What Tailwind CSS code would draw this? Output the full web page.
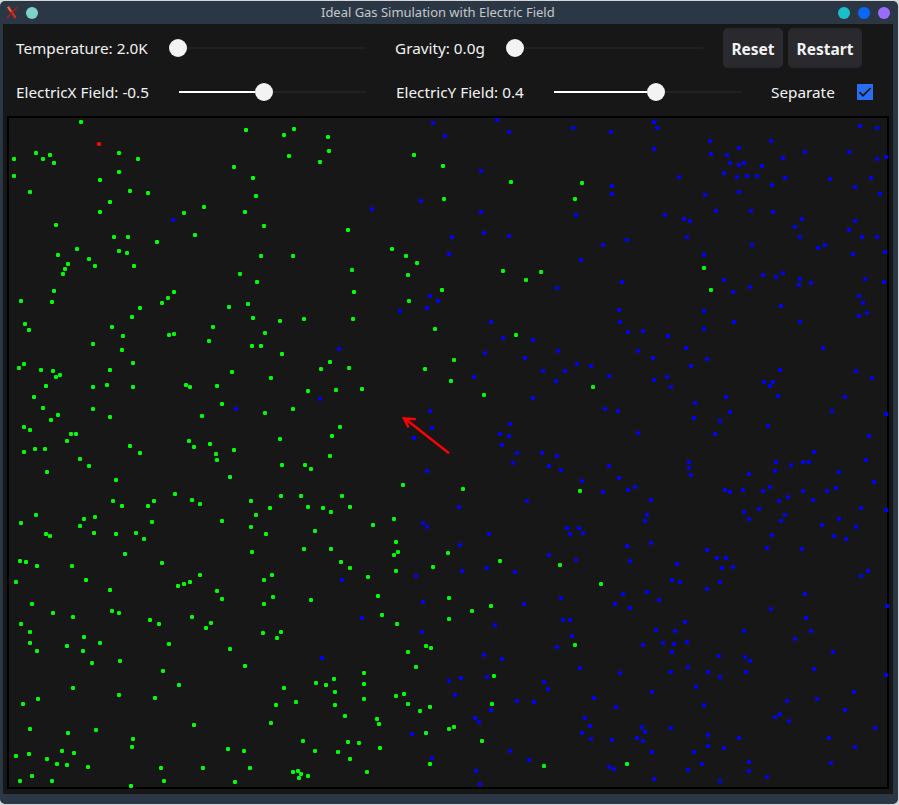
<!DOCTYPE html>
<html lang="en">
<head>
<meta charset="utf-8">
<title>Ideal Gas Simulation with Electric Field</title>
<script src="https://cdn.jsdelivr.net/npm/@tailwindcss/browser@4"></script>
</head>
<body class="w-[899px] h-[805px] overflow-hidden bg-[#d4d8d6] pt-px font-['Noto_Sans',sans-serif]">
<div class="w-[898px] h-[803px] flex flex-col bg-[#2c3745] rounded-[5px] overflow-hidden">
  <header class="h-[23px] shrink-0 flex items-center pl-[6px] pr-[8px]">
    <div class="w-[315px] flex items-center gap-[7px]">
      <svg width="13" height="13" viewBox="0 0 13 13" fill="none"><path d="M2.5 1L9.5 11.8" stroke="#d9281c" stroke-width="2.4"/><path d="M11.5 1C8 4 4.5 8 1 12" stroke="#b32015" stroke-width="1.2"/><path d="M1.8 .8L5 5.5" stroke="#f0604c" stroke-width="2"/></svg>
      <span class="size-3 rounded-full bg-[#7dd3c8]"></span>
    </div>
    <h1 class="text-[13px] leading-[23px] tracking-[-0.02px] text-[#c3c8cb] whitespace-nowrap">Ideal Gas Simulation with Electric Field</h1>
    <div class="ml-auto flex gap-2">
      <span class="size-3 rounded-full bg-[#1bbfca]"></span>
      <span class="size-3 rounded-full bg-[#0b67fb]"></span>
      <span class="size-3 rounded-full bg-[#9b6dff]"></span>
    </div>
  </header>
  <main class="ml-[3px] w-[890px] h-[770px] bg-[#171717] text-[#f3f3f3] text-[15.3px] leading-[22px]">
    <div class="h-[48px] flex items-center pl-[13px]">
      <label class="w-[162px] whitespace-nowrap">Temperature: 2.0K</label>
      <div class="w-[188px] flex items-center"><span class="size-[18px] -ml-[9px] rounded-full bg-[#f3f3f3]"></span><span class="flex-1 h-[2px] bg-[#212121]"></span></div>
      <label class="ml-[29px] w-[120px] whitespace-nowrap">Gravity: 0.0g</label>
      <div class="w-[188px] flex items-center"><span class="size-[18px] -ml-[9px] rounded-full bg-[#f3f3f3]"></span><span class="flex-1 h-[2px] bg-[#212121]"></span></div>
      <button class="ml-[20px] w-[60px] h-10 rounded-[5px] bg-[#29292e] font-bold text-[15.5px] pt-[2px]">Reset</button>
      <button class="ml-[5px] w-[74px] h-10 rounded-[5px] bg-[#29292e] font-bold text-[15.5px] pt-[2px]">Restart</button>
    </div>
    <div class="h-[40px] flex items-center pl-[13px]">
      <label class="w-[163px] whitespace-nowrap">ElectricX Field: -0.5</label>
      <div class="w-[188px] flex items-center"><span class="w-[76px] h-[2px] bg-white"></span><span class="size-[18px] rounded-full bg-[#f3f3f3]"></span><span class="flex-1 h-[2px] bg-[#212121]"></span></div>
      <label class="ml-[29px] w-[158px] whitespace-nowrap">ElectricY Field: 0.4</label>
      <div class="w-[188px] flex items-center"><span class="w-[93px] h-[2px] bg-white"></span><span class="size-[18px] rounded-full bg-[#f3f3f3]"></span><span class="flex-1 h-[2px] bg-[#212121]"></span></div>
      <label class="ml-[29px] w-[86px] whitespace-nowrap">Separate</label>
      <svg width="16" height="16" viewBox="0 0 16 16" fill="none"><rect width="16" height="16" fill="#2a6df5"/><path d="M2.5 8.2L6 11.7L13.7 4" stroke="#171717" stroke-width="1.7"/></svg>
    </div>
    <div class="ml-1 mt-1 w-[882px] h-[673px] border-2 border-black">
      <svg id="gas" class="block overflow-visible" width="878" height="669" viewBox="9 118 878 669">
        <g id="particles"></g>
        <path d="M449 453.3L404.5 418.3M415.7 419.3L404 418.3L408.5 427.5" fill="none" stroke="#ff0000" stroke-width="2.4"/>
      </svg>
    </div>
  </main>
</div>
<script>
// Particle sectors: origin x, origin y, positive charges, negative charges (units of 1/3 px).
const sectors = [
[0,115,"243,21 108,114 150,120 129,132 162,144 42,132 42,183 90,231 357,114 414,132 357,171 300,195 390,228 444,234 330,261 300,291 612,276 552,294 585,360 168,330 342,366 384,366 471,381 357,408 381,414 402,453 231,402 174,420 204,447 195,462 189,477 267,432 285,453 162,528 156,561 63,558 75,627 87,645 522,531 504,549 486,564 420,579 396,606 336,636 369,663 507,660 522,657 639,636 627,678 279,687","519,315"],
[225,115,"63,45 177,60 207,42 309,66 312,108 285,141 192,123 27,156 84,189 93,243 60,291 117,333 567,120 654,153 657,252 369,345 501,402 543,423 576,444 549,480 108,423 204,423 45,477 96,501 381,465 387,531 384,612 552,558 651,525 630,642 12,576 69,567 84,609 165,618 237,612 120,654","624,24 660,63 588,258 441,282 671,417 615,543 639,558 606,579 525,588"],
[450,115,"183,201 396,204 375,252 159,468 273,471 228,495 198,660","141,15 177,51 369,39 483,51 612,21 621,39 612,102 93,168 486,213 486,237 93,291 378,300 645,300 102,354 6,366 177,363 459,390 531,375 393,435 321,519 516,501 507,585 510,621 534,651 579,648 654,663 123,621 159,669 249,675"],
[675,115,"87,459 108,525","555,33 606,39 105,78 288,78 192,99 108,117 156,120 166,144 192,150 207,144 261,153 324,129 390,111 522,111 606,132 633,126 12,186 147,174 186,186 216,183 246,183 330,189 291,210 465,192 588,189 540,216 615,237 90,240 192,231 123,288 228,288 294,291 27,312 45,318 381,312 360,336 375,366 540,318 522,345 561,366 606,366 36,366 87,420 231,390 429,399 450,390 534,417 630,411 264,480 303,486 324,474 147,495 174,531 225,516 375,492 372,510 408,504 570,492 627,501 552,543 564,564 576,594 552,603 318,573 87,588 87,642 177,621 375,621"],
[0,345,"366,15 399,54 72,57 57,69 123,75 159,78 168,96 180,90 138,123 102,156 129,189 174,210 153,225 330,75 321,120 279,126 399,126 558,120 570,126 651,123 666,177 606,213 279,192 330,216 72,246 90,255 213,267 228,267 201,288 105,312 135,312 72,321 240,342 267,363 141,381 390,303 420,324 567,288 582,306 630,297 648,327 651,345 348,405 339,468 366,483 462,468 444,483 525,447 576,465 600,477 108,510 63,534 138,567 150,573 252,522 285,516 240,543 282,564 348,567 408,564 432,582 456,531 666,528 375,627 486,654 60,648 78,651 111,663 216,663 600,690",""],
[225,345,"81,3 108,3 171,27 21,81 138,99 315,51 288,72 372,69 249,138 333,135 411,132 204,192 120,204 600,72 345,246 321,273 165,282 315,333 27,315 171,360 240,360 258,372 15,396 534,420 78,468 168,453 228,453 351,453 135,489 93,510 249,486 294,489 318,501 375,486 78,546 123,567 270,558 507,522 444,540 513,591 519,621 507,630 513,678 237,612 318,612 348,651 375,669 81,621 669,624 624,666 141,690","342,12 285,162 33,192 615,198 621,249 567,279 606,378 594,534 606,546"],
[450,345,"12,45 3,108 102,150 429,126 39,432 390,438 150,648 330,660","105,24 324,18 225,39 279,78 345,78 381,57 423,63 318,108 477,93 564,18 609,39 612,105 651,96 663,126 72,96 249,159 465,192 504,198 180,237 150,267 177,273 156,300 201,324 189,354 276,324 321,333 297,363 333,375 564,264 477,363 507,399 396,408 459,441 534,435 555,426 603,465 231,468 27,486 591,510 585,528 351,549 387,549 360,567 399,564 117,567 30,600 603,594 531,603 540,648 297,630 111,669 36,678 195,681"],
[675,345,"","33,9 96,42 48,63 444,9 315,75 543,78 591,99 267,111 294,111 285,123 309,153 153,156 60,174 165,201 57,219 135,228 510,156 471,198 633,207 279,243 120,267 582,273 417,321 42,351 42,369 48,390 303,351 348,360 384,351 402,351 300,378 222,387 573,345 492,381 597,411 150,435 165,441 204,435 264,438 285,426 339,456 312,468 384,438 414,465 456,438 483,429 252,492 207,501 222,522 330,510 318,528 558,489 633,495 492,522 441,540 543,546 291,570 477,573 513,582 276,609 381,612 96,615 126,639 153,639 141,669 174,666 6,657 579,678"],
[0,575,"48,21 258,15 330,45 96,87 159,114 219,126 336,108 357,114 63,147 90,171 90,204 111,228 252,186 300,204 201,213 249,228 276,264 360,258 534,33 552,27 570,21 651,48 666,72 576,126 633,144 618,159 450,135 477,147 507,207 690,222 735,273 489,288 537,330 792,15 819,66 792,87 933,75 789,174 843,171 831,189 1104,6 1134,63 1146,120 1191,147 1347,69 1347,132 1278,213 1293,219 1224,231 1248,276 219,339 357,360 465,369 114,372 69,387 90,462 204,474 288,465 399,492 396,516 186,528 222,534 87,537 48,543 141,552 171,567 201,570 264,576 96,603 60,618 156,618 393,633 483,579 492,618 609,579 705,621 684,522 732,528 750,579 582,450 813,444 828,390 852,339 888,381 948,324 978,330 1002,312 1005,351 1005,390 1092,294 1092,327 1092,372 1035,423 1131,432 1137,447 1188,363 1212,357 1224,387 1260,408 1290,396 1347,462 1278,474 909,498 945,528 1014,531 1044,501 1077,504 1140,519 1050,552 1101,591 1290,567 879,591 894,588 903,597 897,609 924,603","1026,15 1269,81 1086,129 1266,171 966,249 1347,318 1236,477 1296,549"],
[449,575,"456,27 126,93 69,108 378,210 135,303 129,387 15,456 99,498 285,573 534,567","669,15 693,21 813,21 774,42 594,51 522,57 498,87 543,99 630,75 336,69 225,87 342,135 363,135 138,150 369,183 324,216 708,141 621,165 678,168 714,201 642,204 675,207 582,210 669,231 105,240 159,252 393,279 513,294 717,276 666,291 777,291 810,243 813,306 885,168 888,246 903,258 891,291 966,102 1068,57 1236,3 1314,93 1071,129 1086,168 1038,192 1152,231 1095,282 1311,300 36,309 114,306 18,360 285,321 297,342 204,378 255,381 435,369 126,405 78,429 90,441 501,396 609,351 741,336 765,390 408,429 423,453 399,474 426,492 489,495 579,456 588,471 564,489 582,498 666,459 609,531 777,480 777,513 825,519 870,489 735,531 759,567 717,585 615,612 813,618 900,561 900,588 954,606 183,528 240,555 480,576 495,582 81,588 1014,378 1104,372 978,426 993,417 1020,438 1215,351 1188,405 1278,459 1140,489 1218,516 1146,564"]
];
let out = '';
const dot = (x, y, c) => `<rect x="${x - 2}" y="${y - 2}" width="4" height="4" rx="1.35" fill="${c}"/>`;
for (const [ox, oy, pos, neg] of sectors)
  for (const [list, color] of [[neg, '#0000ff'], [pos, '#00ff00']])
    for (const p of list.split(' ').filter(Boolean)) {
      const [x, y] = p.split(',').map(Number);
      out += dot(ox + Math.round(x / 3), oy + Math.round(y / 3), color);
    }
out += dot(99, 144, '#ff0000') + dot(416, 576, '#0000ff') + dot(576, 560, '#0000ff') + dot(480, 784, '#0000ff');
document.getElementById('particles').innerHTML = out;
</script>
</body>
</html>
